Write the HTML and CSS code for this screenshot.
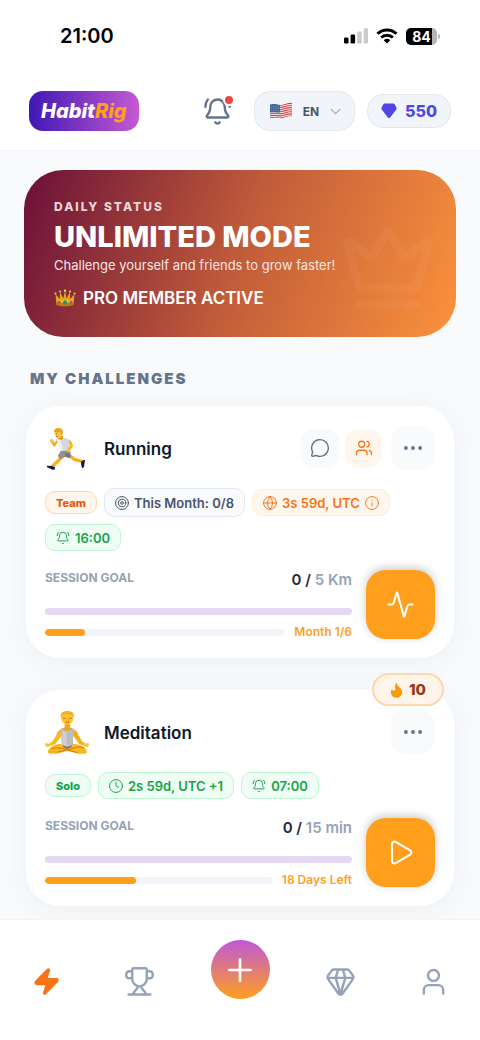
FILE: index.html
```html
<!DOCTYPE html>
<html lang="en">
<head>
<meta charset="utf-8">
<meta name="viewport" content="width=device-width, initial-scale=1">
<title>HabitRig</title>
<link rel="stylesheet" href="styles.css">
</head>
<body>
<svg class="sprite" aria-hidden="true">
  <defs>
    <symbol id="bell-ring" viewBox="0 0 24 24">
      <path d="M10.268 21a2 2 0 0 0 3.464 0"/>
      <path d="M22 8c0-2.3-.8-4.3-2-6"/>
      <path d="M3.262 15.326A1 1 0 0 0 4 17h16a1 1 0 0 0 .74-1.673C19.41 13.956 18 12.499 18 8A6 6 0 0 0 6 8c0 4.499-1.411 5.956-2.738 7.326"/>
      <path d="M4 2C2.8 3.7 2 5.7 2 8"/>
    </symbol>
    <symbol id="dots" viewBox="0 0 24 24">
      <circle cx="12" cy="12" r="2.300"/><circle cx="20.500" cy="12" r="2.300"/><circle cx="3.500" cy="12" r="2.300"/>
    </symbol>
  </defs>
</svg>

<div class="status-bar">
  <span class="clock">21:00</span>
  <div class="status-icons">
    <svg width="24" height="16" viewBox="0 0 24 16" aria-hidden="true">
      <rect x="0" y="9.500" width="4.500" height="6" rx="1.300"/>
      <rect x="6.600" y="6.500" width="4.500" height="9" rx="1.300"/>
      <rect x="13.200" y="3.500" width="4.500" height="12" rx="1.300" fill="#cbcbcb"/>
      <rect x="19.700" y="0.300" width="4.300" height="15.200" rx="1.300" fill="#cbcbcb"/>
    </svg>
    <svg width="22" height="16" viewBox="0 0 22 16" aria-hidden="true">
      <g fill="none" stroke="#000" stroke-width="3">
        <path d="M1.500 5.800a13.600 13.600 0 0 1 19 0"/>
        <path d="M5.100 9.500a8.600 8.600 0 0 1 11.800 0"/>
      </g>
      <path d="M7.700 12.200a5 5 0 0 1 6.600 0L11 15.600z"/>
    </svg>
    <span class="battery"><span class="battery-level">84</span></span>
  </div>
</div>

<header class="top-bar">
  <a class="logo" href="#">Habit<span class="logo-accent">Rig</span></a>
  <div class="top-actions">
    <button class="bell" type="button" aria-label="Notifications">
      <svg class="icon" width="29" height="29"><use href="#bell-ring"/></svg>
      <span class="bell-dot"></span>
    </button>
    <button class="language" type="button">
      <svg width="24" height="18" viewBox="0 0 24 18" aria-hidden="true">
        <clipPath id="flag"><path d="M1 2.800C6 .8 9 4 14 2.500S20 .5 23 1v13.500c-4-1-6 .5-9.500 1.500S6 14.500 1 16.500z"/></clipPath>
        <g clip-path="url(#flag)">
          <rect width="24" height="18" fill="#f3eeee"/>
          <g fill="none" stroke="#d2434b" stroke-width="1.100">
            <path d="M0 3.500C6 1.500 9 4.500 14 3S20 1 24 1.500"/>
            <path d="M0 5.600C6 3.600 9 6.600 14 5.100S20 3.100 24 3.600"/>
            <path d="M0 7.700C6 5.700 9 8.700 14 7.200S20 5.200 24 5.700"/>
            <path d="M0 9.800C6 7.800 9 10.800 14 9.300S20 7.300 24 7.800"/>
            <path d="M0 11.900C6 9.900 9 12.900 14 11.400S20 9.400 24 9.900"/>
            <path d="M0 14C6 12 9 15 14 13.500S20 11.500 24 12"/>
            <path d="M0 16.100C6 14.100 9 17.100 14 15.600S20 13.600 24 14.100"/>
          </g>
          <path d="M0 1h11v9.500C7 10.500 5 9.500 0 10.800z" fill="#41669f"/>
          <path d="M2 4.500h8M2 6.500h8M2 8.500h8" stroke="#a9bad6" stroke-width=".6" stroke-dasharray=".8 1"/>
        </g>
      </svg>
      <span>EN</span>
      <svg class="icon chevron" width="13" height="13" viewBox="0 0 24 24" aria-hidden="true"><path d="m4 8 8 8 8-8"/></svg>
    </button>
    <button class="gems" type="button">
      <svg width="16" height="16" viewBox="0 0 16 16" aria-hidden="true"><path d="M3.600.5h8.800q.8 0 1.200.7l1.900 3.500q.5 1-.2 1.800l-6.200 8q-1.100 1.300-2.200 0l-6.200-8Q0 5.700.5 4.700l1.900-3.500Q2.800.5 3.600.5z" fill="#5046e5"/></svg>
      <span>550</span>
    </button>
  </div>
</header>

<main class="content">
  <section class="hero">
    <p class="hero-label">DAILY STATUS</p>
    <h1 class="hero-title">UNLIMITED MODE</h1>
    <p class="hero-text">Challenge yourself and friends to grow faster!</p>
    <p class="hero-member">
      <svg width="22" height="18" viewBox="0 0 22 18" aria-hidden="true">
        <path d="M2.500 15.500 1.500 5l4.300 5L6 3l3.300 6.500L11 2l1.700 7.500L16 3l.2 7 4.300-5-1 10.500q-8.500 3-17 0z" fill="#e0a91c"/>
        <path d="M2.300 13q8.700 2.500 17.400 0l-.2 3q-8.500 2.800-17 0z" fill="#b97d13"/>
        <g fill="#f6d056"><circle cx="1.500" cy="4.500" r="1"/><circle cx="6" cy="2.500" r="1"/><circle cx="11" cy="1.800" r="1.200"/><circle cx="16" cy="2.500" r="1"/><circle cx="20.500" cy="4.500" r="1"/></g>
        <circle cx="11" cy="13.500" r="1.900" fill="#139b73"/><circle cx="5" cy="13.300" r="1.200" fill="#c33b90"/><circle cx="17" cy="13.300" r="1.200" fill="#c33b90"/>
        <path d="M8 11v2m6-2v2" stroke="#f7d767" stroke-width="1"/>
      </svg>
      <span>PRO MEMBER ACTIVE</span>
    </p>
    <svg class="icon hero-crown" width="98" height="98" viewBox="0 0 24 24" aria-hidden="true">
      <path d="M11.562 3.266a.5.5 0 0 1 .876 0L15.390 8.870a1 1 0 0 0 1.516.294L21.183 5.500a.5.500 0 0 1 .798.519l-2.834 10.246a1 1 0 0 1-.956.734H5.810a1 1 0 0 1-.957-.734L2.020 6.020a.5.500 0 0 1 .798-.519l4.276 3.664a1 1 0 0 0 1.516-.294z"/>
      <path d="M5 21h14"/>
    </svg>
  </section>

  <h2 class="section-title">MY CHALLENGES</h2>

  <article class="card">
    <div class="card-head">
      <svg class="avatar" width="44" height="44" viewBox="0 0 132 132" aria-hidden="true">
        <g fill="none" stroke-linecap="round" stroke-linejoin="round">
          <path d="M58 86 40 104 20 122" stroke="#f7b01e" stroke-width="10"/>
          <path d="M70 86 88 100 110 106" stroke="#f7b01e" stroke-width="10"/>
          <path d="M37 44 28 58 21 46" stroke="#f2a81b" stroke-width="7"/>
        </g>
        <path d="M15 44q0-6 7-5 6 2 3 8t-7 4z" fill="#fbc02d"/>
        <path d="M32 42q8-10 22-6 18 1 23 10l-4 28q-12 8-26 3-2-14-5-25z" fill="#d7d7da"/>
        <path d="m36 42 10 32q4 4 10 3-8-20-8-40z" fill="#eeeef0"/>
        <path d="m48 74 28 2q4 12 0 20l-18-4-12 8-8-10z" fill="#8f9093"/>
        <path d="m60 80 14 4 2 12-15-4z" fill="#737478"/>
        <path d="m75 47 5 12-10 15" fill="none" stroke="#f8b51f" stroke-width="8" stroke-linecap="round" stroke-linejoin="round"/>
        <circle cx="70" cy="73" r="5" fill="#fbc02d"/>
        <path d="M40 30h14v9l-8 3-7-4z" fill="#e99b17"/>
        <path d="M28 17q0-10 13-10 12 1 11 15-1 13-10 15-12-1-14-20z" fill="#fcc736"/>
        <path d="M27 18q-1-11 14-12 16 1 12 18l-4 3-4-8q-9 0-18-1z" fill="#e5a428"/>
        <circle cx="35" cy="23" r="1.500" fill="#6b3e13"/><path d="m33 31 6 1" stroke="#8b4a16" stroke-width="2"/>
        <path d="m6 119 13 1 11 3-1 8q-9 1-12-3l-11-4z" fill="#15165b"/>
        <path d="m108 107 9-6 3 2-3 20-6 4q-3-9-3-20z" fill="#15165b"/>
      </svg>
      <h3 class="card-title">Running</h3>
      <div class="card-tools">
        <button class="tool tool-chat" type="button" aria-label="Chat">
          <svg class="icon" width="20" height="20" viewBox="0 0 24 24"><path d="M2.992 16.342a2 2 0 0 1 .094 1.167l-1.065 3.290a1 1 0 0 0 1.236 1.168l3.413-.998a2 2 0 0 1 1.099.092 10 10 0 1 0-4.777-4.719"/></svg>
        </button>
        <button class="tool tool-team" type="button" aria-label="Members">
          <svg class="icon" width="18" height="18" viewBox="0 0 24 24"><path d="M16 21v-2a4 4 0 0 0-4-4H6a4 4 0 0 0-4 4v2"/><path d="M16 3.128a4 4 0 0 1 0 7.744"/><path d="M22 21v-2a4 4 0 0 0-3-3.870"/><circle cx="9" cy="7" r="4"/></svg>
        </button>
        <button class="tool tool-more" type="button" aria-label="More"><svg width="20" height="20"><use href="#dots"/></svg></button>
      </div>
    </div>
    <div class="chips">
      <span class="chip chip-tag chip-team">Team</span>
      <span class="chip chip-month">
        <svg class="icon" width="14" height="14" viewBox="0 0 24 24" aria-hidden="true"><circle cx="12" cy="12" r="11"/><circle cx="12" cy="12" r="6.500"/><circle cx="12" cy="12" r="2.200"/></svg>
        This Month: 0/8
      </span>
      <span class="chip chip-orange">
        <svg class="icon" width="14" height="14" viewBox="0 0 24 24" aria-hidden="true"><circle cx="12" cy="12" r="11"/><path d="M12 1a16 16 0 0 0 0 22 16 16 0 0 0 0-22M1 12h22"/></svg>
        3s 59d, UTC
        <svg class="icon" width="14" height="14" viewBox="0 0 24 24" aria-hidden="true"><circle cx="12" cy="12" r="11"/><path d="M12 17v-5.500M12 7.500v.1"/></svg>
      </span>
      <span class="chip chip-green">
        <svg class="icon" width="14" height="14" aria-hidden="true"><use href="#bell-ring"/></svg>
        16:00
      </span>
    </div>
    <div class="card-body">
      <div class="progress">
        <div class="goal"><span class="goal-label">SESSION GOAL</span><span class="goal-value">0 / <span class="goal-unit">5 Km</span></span></div>
        <div class="bar bar-session"></div>
        <div class="period"><div class="bar"><div class="bar-fill" style="width: 16.7%"></div></div><span class="period-text">Month 1/6</span></div>
      </div>
      <button class="start" type="button" aria-label="Log activity">
        <svg class="icon" width="29" height="29" viewBox="0 0 24 24"><path d="M22 12h-2.480a2 2 0 0 0-1.930 1.460l-2.350 8.360a.25.250 0 0 1-.48 0L9.240 2.180a.25.250 0 0 0-.48 0l-2.350 8.360A2 2 0 0 1 4.490 12H2"/></svg>
      </button>
    </div>
  </article>

  <article class="card">
    <span class="streak">
      <svg width="13" height="16" viewBox="0 0 13 16" aria-hidden="true"><path d="M6.500.4c.3 2.400 1.600 3.500 3.200 5.200 1.500 1.600 2.500 2.900 2.500 5a5.700 5.200 0 0 1-11.400 0c0-1.700.6-3 1.300-3.900.2 1.200.8 2.100 1.800 2.100 1.300 0 1.700-1 1.400-2.300-.5-2.300-.3-4.200 1.200-6.100z" fill="#f79a0b"/></svg>
      <span>10</span>
    </span>
    <div class="card-head">
      <svg class="avatar" width="44" height="44" viewBox="0 0 132 132" aria-hidden="true">
        <path d="M50 58q-14 4-16 18L22 95l-18 10 3 6 24-9 20-26z" fill="#f8b91f"/>
        <path d="M84 58q14 4 16 18l12 19 18 10-3 6-24-9-20-26z" fill="#f4ad18"/>
        <path d="M59 38h16v14l12 6v14H47V58l12-6z" fill="#eda51a"/>
        <path d="M50 54q5 8 17 8t17-8l3 8-3 22 1 26H49l1-26-3-22z" fill="#bcbdc1"/>
        <path d="M53 60q1 24-2 48h14V66q-8-1-12-6z" fill="#cfd0d4"/>
        <path d="M48 16q1-12 19-12t19 12q2 27-19 28-21-1-19-28z" fill="#fcc62c"/>
        <path d="M47 22Q46 3 67 3t20 19l-5-7q-15-3-30 0z" fill="#eeb02e"/>
        <path d="M54 24q4 3 8 0m10 0q4 3 8 0" fill="none" stroke="#7b4715" stroke-width="2"/><path d="M61 36q6 3 12 0" stroke="#a8561b" stroke-width="2.500" fill="none"/><path d="M67 26v5" stroke="#dc931a" stroke-width="2"/>
        <path d="M48 102q-20 0-32 11-9 8-7 15 8 6 31 2l27-7 27 7q23 4 31-2 2-7-7-15-12-11-32-11l-19 9z" fill="#f8b71f"/>
        <path d="M36 127 95 112q14-3 23 2M20 116q14-5 30-1l48 13" fill="none" stroke="#cf8213" stroke-width="3"/>
        <path d="m54 106 13 5 13-5v5l-13 6-13-6z" fill="#75767a"/>
        <g fill="#fcc42a"><path d="m2 98 9 4 8-6-1 9-13 5-5-4z"/><path d="m131 98-9 4-8-6 1 9 13 5 4-4z"/></g>
      </svg>
      <h3 class="card-title">Meditation</h3>
      <div class="card-tools">
        <button class="tool tool-more" type="button" aria-label="More"><svg width="20" height="20"><use href="#dots"/></svg></button>
      </div>
    </div>
    <div class="chips">
      <span class="chip chip-tag chip-solo">Solo</span>
      <span class="chip chip-green">
        <svg class="icon" width="14" height="14" viewBox="0 0 24 24" aria-hidden="true"><circle cx="12" cy="12" r="11"/><path d="M12 5v7l4.500 2.500"/></svg>
        2s 59d, UTC +1
      </span>
      <span class="chip chip-green">
        <svg class="icon" width="14" height="14" aria-hidden="true"><use href="#bell-ring"/></svg>
        07:00
      </span>
    </div>
    <div class="card-body">
      <div class="progress">
        <div class="goal"><span class="goal-label">SESSION GOAL</span><span class="goal-value">0 / <span class="goal-unit">15 min</span></span></div>
        <div class="bar bar-session"></div>
        <div class="period"><div class="bar"><div class="bar-fill" style="width: 40%"></div></div><span class="period-text">18 Days Left</span></div>
      </div>
      <button class="start" type="button" aria-label="Start session">
        <svg class="icon" width="29" height="29" viewBox="0 0 24 24"><path d="M5 5a2 2 0 0 1 3.008-1.728l11.997 6.998a2 2 0 0 1 .003 3.458l-12 7A2 2 0 0 1 5 19z"/></svg>
      </button>
    </div>
  </article>
</main>

<nav class="tab-bar" aria-label="Main">
  <a class="tab tab-active" href="#" aria-label="Home">
    <svg class="icon" width="29" height="29" viewBox="0 0 24 24"><path d="M4 14a1 1 0 0 1-.78-1.630l9.900-10.200a.5.500 0 0 1 .86.460l-1.920 6.020A1 1 0 0 0 13 10h7a1 1 0 0 1 .78 1.630l-9.900 10.200a.5.500 0 0 1-.86-.460l1.920-6.020A1 1 0 0 0 11 14z"/></svg>
  </a>
  <a class="tab" href="#" aria-label="Trophies">
    <svg class="icon" width="29" height="29" viewBox="0 0 24 24"><path d="M7 1h10q1 0 1 1v8a6 6 0 0 1-12 0V2q0-1 1-1zM6 3.500H4Q1 3.500 1 6.500T4 9.300h2M18 3.500h2q3 0 3 3t-3 2.800h-2M3 22.800h18M10.500 16.200c0 3-3.300 3-3.700 6.600M13.500 16.200c0 3 3.300 3 3.700 6.600"/></svg>
  </a>
  <button class="add" type="button" aria-label="Add challenge">
    <svg class="icon" width="32" height="32" viewBox="0 0 24 24"><path d="M4 12h16M12 4v16"/></svg>
  </button>
  <a class="tab" href="#" aria-label="Gems">
    <svg class="icon" width="29" height="29" viewBox="0 0 24 24"><path d="M6.500 2h11q1 0 1.600.8l3.300 4.400q.9 1.300 0 2.600l-8.800 12.300q-1.600 1.800-3.200 0L1.600 9.800q-.9-1.300 0-2.600l3.300-4.400Q5.500 2 6.500 2zM1.500 9h21M10 2.200 8 9l4 13.500L16 9l-2-6.800"/></svg>
  </a>
  <a class="tab" href="#" aria-label="Profile">
    <svg class="icon" width="29" height="29" viewBox="0 0 24 24"><path d="M20 22v-3a4 4 0 0 0-4-4H8a4 4 0 0 0-4 4v3"/><circle cx="12" cy="7" r="4.500"/></svg>
  </a>
</nav>
</body>
</html>
```
FILE: styles.css
```css
* { box-sizing: border-box; }

body {
  margin: 0;
  min-height: 100vh;
  display: flex;
  flex-direction: column;
  background: #f8fafc;
  color: #0f172a;
  font-family: Inter, "Liberation Sans", sans-serif;
}

h1, h2, h3, p { margin: 0; }
button { border: 0; padding: 0; font: inherit; color: inherit; background: none; cursor: pointer; }
a { color: inherit; text-decoration: none; }
svg { display: block; flex: none; }

.sprite { position: absolute; width: 0; height: 0; }

.icon {
  fill: none;
  stroke: currentColor;
  stroke-width: 2;
  stroke-linecap: round;
  stroke-linejoin: round;
}

/* Status bar */
.status-bar {
  display: flex;
  align-items: center;
  justify-content: space-between;
  height: 72px;
  padding: 0 40px 0 60px;
  background: #fff;
  color: #000;
}
.clock { font-size: 20px; font-weight: 600; }
.status-icons { display: flex; align-items: center; gap: 8px; }
.battery { display: flex; align-items: center; gap: 1px; }
.battery::after { content: ""; width: 2px; height: 5px; border-radius: 0 2px 2px 0; background: #b5b5b5; }
.battery-level {
  width: 31px;
  border-radius: 5px;
  background: linear-gradient(90deg, #000 84%, #b5b5b5 84%);
  color: #fff;
  font-size: 14px;
  font-weight: 700;
  line-height: 17px;
  text-align: center;
}

/* Header */
.top-bar {
  display: flex;
  align-items: center;
  justify-content: space-between;
  padding: 19px 29px;
  border-bottom: 1px solid #f1f5f9;
  background: #fff;
}
.logo {
  padding: 0 12px;
  border-radius: 14px;
  background: linear-gradient(90deg, #3f18b5, #c659d2);
  color: #fff;
  font-size: 20px;
  font-style: italic;
  font-weight: 800;
  line-height: 40px;
}
.logo-accent { color: #ff9f1c; }
.top-actions { display: flex; align-items: center; gap: 12px; }
.bell { position: relative; margin-right: 10px; color: #64748b; }
.bell-dot {
  position: absolute;
  top: -3px;
  right: -3px;
  width: 12px;
  height: 12px;
  border: 2px solid #fff;
  border-radius: 50%;
  background: #ef4444;
}
.language, .gems {
  display: flex;
  align-items: center;
  border: 1px solid #e2e8f0;
  background: #f1f5f9;
}
.language {
  gap: 10px;
  height: 40px;
  padding: 0 12px 0 14px;
  border-radius: 16px;
  color: #475569;
  font-size: 12px;
  font-weight: 700;
}
.chevron { color: #94a3b8; }
.gems {
  gap: 8px;
  height: 34px;
  padding: 0 13px;
  border-radius: 16px;
  color: #4f46e5;
  font-size: 16px;
  font-weight: 800;
}

/* Content */
.content { flex: 1; padding: 19px 24px 13px; }

.hero {
  position: relative;
  overflow: hidden;
  padding: 29px 30px 28px;
  border-radius: 39px;
  background: linear-gradient(110deg, #6a1039, #c15c3a 50%, #fb923c);
  color: #fff;
}
.hero-label { color: #ecd5da; font-size: 12px; font-weight: 800; letter-spacing: 2px; line-height: 16px; }
.hero-title { margin-top: 4px; font-size: 29px; font-weight: 800; line-height: 36px; }
.hero-text { color: #f6e5e0; font-size: 13px; line-height: 20px; }
.hero-member {
  display: flex;
  align-items: center;
  gap: 7px;
  margin-top: 12px;
  font-size: 17px;
  font-weight: 600;
  line-height: 22px;
}
.hero-crown { position: absolute; right: 19px; bottom: 20px; color: #fff; opacity: 0.04; }

.section-title {
  padding: 0 6px;
  margin: 32px 0 17px;
  color: #64748b;
  font-size: 15px;
  font-weight: 900;
  letter-spacing: 2px;
  line-height: 20px;
}

/* Challenge cards */
.card {
  position: relative;
  margin: 0 2px;
  padding: 20px 19px 19px;
  border-radius: 34px;
  background: #fff;
  box-shadow: 0 4px 28px rgba(71, 85, 105, 0.06);
}
.card + .card { margin-top: 32px; }
.card-head { display: flex; align-items: center; gap: 15px; }
.card-title { flex: 1; font-size: 17px; font-weight: 600; line-height: 22px; padding-top: 2px; }
.card-tools { display: flex; align-items: center; }
.tool { display: grid; place-items: center; height: 39px; }
.tool .icon { stroke-width: 1.7; }
.tool-chat { width: 40px; margin-right: 5px; border-radius: 14px; background: #f8fafc; color: #64748b; }
.tool-team { width: 37px; margin-right: 9px; border-radius: 14px; background: #fff7ed; color: #f97316; }
.tool-more { width: 44px; height: 44px; border-radius: 15px; background: #f8fafc; fill: #64748b; }

.chips { display: flex; flex-wrap: wrap; align-items: center; gap: 7px; margin: 18px 0 19px; }
.chip {
  display: flex;
  align-items: center;
  gap: 5px;
  height: 27px;
  padding: 0 10px;
  border: 1px solid;
  border-radius: 10px;
  font-size: 13px;
  font-weight: 600;
}
.chip .icon { stroke-width: 1.7; }
.chip-tag { height: 23px; font-size: 11px; font-weight: 800; }
.chip-team { border-color: #fed7aa; background: #fff7ed; color: #ea580c; }
.chip-solo { border-color: #bbf7d0; background: #f0fdf4; color: #16a34a; }
.chip-month { height: 29px; border-color: #e2e8f0; background: #f8fafc; color: #475569; }
.chip-orange { border-color: #ffedd5; background: #fff7ed; color: #f97316; }
.chip-green { border-color: #bbf7d0; background: #f0fdf4; color: #16a34a; }

.card-body { display: flex; gap: 14px; }
.progress { flex: 1; display: flex; flex-direction: column; }
.goal { display: flex; justify-content: space-between; margin-bottom: 18px; line-height: 20px; }
.goal-label { color: #94a3b8; font-size: 12px; font-weight: 700; line-height: 15px; }
.goal-value { color: #1e293b; font-size: 15px; font-weight: 600; }
.goal-unit { color: #94a3b8; }
.bar { flex: 1; height: 7px; border-radius: 4px; background: #f1f5f9; overflow: hidden; }
.bar-session { flex: none; margin-bottom: 10px; background: #e6d8f2; }
.bar-fill { height: 100%; border-radius: 4px; background: #ff9f1c; }
.period { display: flex; align-items: center; gap: 10px; }
.period-text { color: #ff9f1c; font-size: 12px; font-weight: 600; line-height: 14px; }
.start {
  display: grid;
  place-items: center;
  width: 69px;
  height: 69px;
  border-radius: 20px;
  background: #ff9f1c;
  color: #fff;
  box-shadow: 0 -3px 10px rgba(0, 0, 0, 0.16), 0 0 8px rgba(0, 0, 0, 0.06);
}
.start .icon { stroke-width: 1.7; }

.streak {
  position: absolute;
  top: -17px;
  right: 10px;
  display: flex;
  align-items: center;
  justify-content: center;
  gap: 6px;
  width: 72px;
  height: 33px;
  border: 2px solid #fed7aa;
  border-radius: 17px;
  background: #fff4ea;
  color: #9a3412;
  font-size: 15px;
  font-weight: 800;
}

/* Bottom navigation */
.tab-bar {
  position: sticky;
  bottom: 0;
  display: flex;
  align-items: flex-start;
  padding: 20px 0 41px;
  border-top: 1px solid #f1f5f9;
  background: #fff;
}
.tab { flex: 1; display: flex; justify-content: center; padding-top: 27px; color: #94a3b8; }
.tab .icon { overflow: visible; }
.tab-active { color: #f97316; }
.tab-active .icon { fill: currentColor; }
.add {
  display: grid;
  place-items: center;
  width: 59px;
  height: 59px;
  margin: 0 24px;
  border-radius: 50%;
  background: linear-gradient(#c058d8, #ff9f1c);
  color: #fff;
}
```
